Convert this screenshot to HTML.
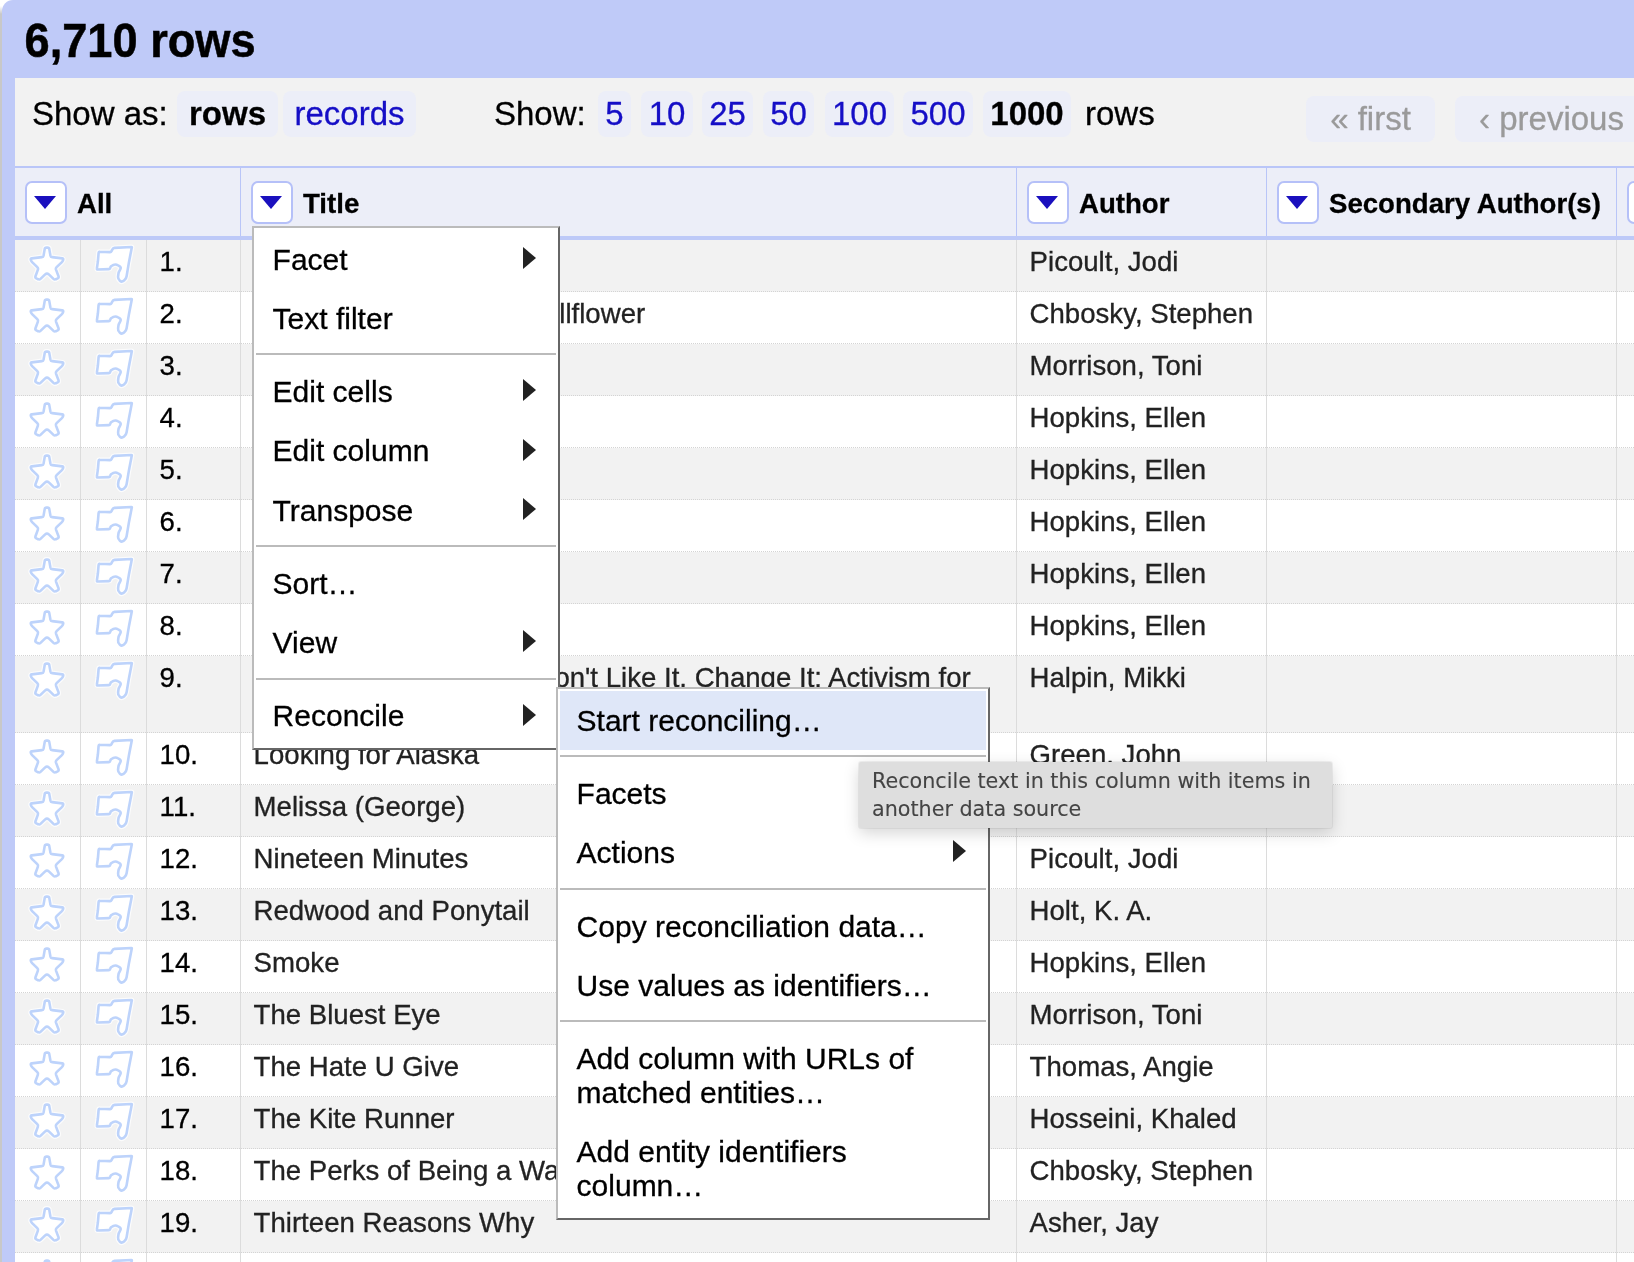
<!DOCTYPE html>
<html lang="en"><head><meta charset="utf-8"><title>OpenRefine</title>
<style>
html,body{margin:0;padding:0}
body{width:1634px;height:1262px;overflow:hidden;position:relative;background:#fff;font-family:"Liberation Sans",Arial,sans-serif;color:#000}
#root{position:absolute;left:0;top:0;width:1634px;height:1262px;overflow:hidden;opacity:.999;-webkit-text-stroke:.3px}
.abs{position:absolute}
#strip{left:0;top:6px;width:2px;height:1256px;background:linear-gradient(#fff,#c8c8c8 8px)}
#panel{left:2px;top:0;width:1632px;height:1262px;background:#bfcaf8;border-top-left-radius:11px}
#inner{left:15px;top:78px;width:1619px;height:1184px;background:#f2f2f2}
#title{left:24.5px;top:15.8px;-webkit-text-stroke:.5px #000;transform:scaleY(1.05);transform-origin:0 41.5px;font-size:45.2px;font-weight:700;line-height:52px;white-space:nowrap}
.bar{font-size:33px;line-height:46px;white-space:nowrap;top:91px;height:46px}
.btn{background:#eceef8;border-radius:8px;text-align:center;color:#150ec6}
.btn.sel{color:#000;font-weight:700}
.pg{top:96px;height:46px;color:#9a9a9a;line-height:45px}
#hdr{left:15px;top:166px;width:1619px;height:68px;border-top:2px solid #bac6f8;border-bottom:4px solid #bdc9f8;background:#eceef8}
.hc{position:absolute;top:0;height:68px;border-left:1px solid #b9c5f8}
.dd{position:absolute;left:10px;top:13px;width:38px;height:39px;border:2px solid #b5c0f8;border-radius:7px;background:#fff}
.dd:after{content:"";position:absolute;left:7.2px;top:12.6px;border-left:11.9px solid transparent;border-right:11.9px solid transparent;border-top:13.6px solid #1a10be}
.hl{position:absolute;left:62px;top:19px;font-size:27.6px;font-weight:700;line-height:34px;white-space:nowrap}
.row{position:absolute;left:15px;width:1619px;box-sizing:border-box;border-bottom:1px dotted #d4d4d4;font-size:27.6px;line-height:33px}
.row.odd{background:#f2f2f2}
.row.even{background:#fff}
.c{position:absolute;top:0;bottom:-1px;box-sizing:border-box;border-left:1px solid #dcdcdc;padding:5px 0 0 12.6px;color:#222;overflow:hidden}
.c0{left:0;width:66px;border-left:none}
.c1{left:65px;width:67px}
.c2{left:131px;width:95px;color:#000}
.c3{left:225px;width:776px;padding-right:20px}
.c4{left:1001px;width:250px}
.c5{left:1251px;width:350px}
.c6{left:1601px;width:30px}
.ic{position:absolute;fill:#fff;stroke:#bdd3fb;stroke-width:2.6;stroke-linejoin:round;filter:blur(.65px)}
.ic .halo{fill:none;stroke:rgba(255,255,255,.75);stroke-width:5}
.star{left:12px;top:4px;width:40px;height:40px}
.flag{left:11px;top:3px;width:44px;height:44px}
.menu{position:absolute;box-sizing:border-box;background:#fff;border:2px solid #bbb;border-right-color:#666;border-bottom-color:#666;padding:2px;font-size:30px;line-height:34px;color:#000}
.mi{position:relative;padding:12.6px 40px 12.6px 16.6px}
.mi.hi{background:#dfe7f8}
.mi.sub:after{content:"";position:absolute;right:20px;top:16.8px;border-top:11.5px solid transparent;border-bottom:11.5px solid transparent;border-left:13px solid #222}
.sep{height:2px;background:#bbb;margin:5px 0 7.2px}
#tip{left:859px;top:762px;width:473px;height:66px;box-sizing:border-box;background:#dedede;border-radius:2px;box-shadow:0 5px 16px rgba(0,0,0,.17),0 0 0 1px rgba(0,0,0,.05);-webkit-text-stroke:.1px;font-family:"DejaVu Sans","Liberation Sans",sans-serif;font-size:20.7px;line-height:28px;color:#444;padding:5px 0 0 13px;white-space:nowrap}
</style></head><body><div id="root">
<div class="abs" id="strip"></div>
<div class="abs" id="panel"></div>
<div class="abs" id="inner"></div>
<div class="abs" id="title">6,710 rows</div>

<div class="abs bar" style="left:32px">Show as:</div>
<div class="abs bar btn sel" style="left:177px;width:101px">rows</div>
<div class="abs bar btn" style="left:283px;width:133px">records</div>
<div class="abs bar" style="left:494px">Show:</div>
<div class="abs bar btn" style="left:598px;width:33px">5</div>
<div class="abs bar btn" style="left:641px;width:52px">10</div>
<div class="abs bar btn" style="left:702px;width:51px">25</div>
<div class="abs bar btn" style="left:763px;width:51px">50</div>
<div class="abs bar btn" style="left:825px;width:69px">100</div>
<div class="abs bar btn" style="left:903px;width:70px">500</div>
<div class="abs bar btn sel" style="left:983px;width:88px">1000</div>
<div class="abs bar" style="left:1085px">rows</div>
<div class="abs bar btn pg" style="left:1306px;width:129px">« first</div>
<div class="abs bar btn pg" style="left:1455px;width:193px">‹ previous</div>

<div class="abs" id="hdr">
<div class="hc" style="left:0;width:225px;border-left:none"><span class="dd"></span><span class="hl">All</span></div>
<div class="hc" style="left:225px;width:776px"><span class="dd"></span><span class="hl">Title</span></div>
<div class="hc" style="left:1001px;width:250px"><span class="dd"></span><span class="hl">Author</span></div>
<div class="hc" style="left:1251px;width:350px"><span class="dd"></span><span class="hl">Secondary Author(s)</span></div>
<div class="hc" style="left:1601px;width:30px"><span class="dd"></span></div>
</div>

<div class="row odd" style="top:240px;height:52px"><div class="c c0"><svg class="ic star" viewBox="0 0 40 40"><path class="halo" d="M17.7 5.1Q17.9 3.6 19.4 3.6L20.6 3.6Q22.1 3.6 22.3 5.1L23.4 11.4Q23.7 12.9 25.2 13.1L35.2 14.4Q36.5 14.6 36.2 15.8L36.1 16.0Q35.8 17.2 34.9 18.1L29.6 23.1Q28.5 24.1 29.0 25.6L31.5 32.3Q32.0 33.7 30.7 34.4L28.9 35.2Q27.6 35.9 26.5 34.9L21.8 30.4Q20.0 28.7 18.2 30.4L13.5 34.9Q12.4 35.9 11.1 35.2L9.3 34.4Q8.0 33.7 8.5 32.3L10.9 25.6Q11.4 24.2 10.3 23.1L5.1 18.1Q4.2 17.2 3.9 16.0L3.8 15.8Q3.5 14.6 4.8 14.4L14.8 13.1Q16.3 12.9 16.6 11.4Z"/><path d="M17.7 5.1Q17.9 3.6 19.4 3.6L20.6 3.6Q22.1 3.6 22.3 5.1L23.4 11.4Q23.7 12.9 25.2 13.1L35.2 14.4Q36.5 14.6 36.2 15.8L36.1 16.0Q35.8 17.2 34.9 18.1L29.6 23.1Q28.5 24.1 29.0 25.6L31.5 32.3Q32.0 33.7 30.7 34.4L28.9 35.2Q27.6 35.9 26.5 34.9L21.8 30.4Q20.0 28.7 18.2 30.4L13.5 34.9Q12.4 35.9 11.1 35.2L9.3 34.4Q8.0 33.7 8.5 32.3L10.9 25.6Q11.4 24.2 10.3 23.1L5.1 18.1Q4.2 17.2 3.9 16.0L3.8 15.8Q3.5 14.6 4.8 14.4L14.8 13.1Q16.3 12.9 16.6 11.4Z"/></svg></div><div class="c c1"><svg class="ic flag" viewBox="0 0 44 44"><path class="halo" d="M6.6 9.8Q6.7 8.6 7.9 8.7L18.1 9.1Q19.1 9.1 19.5 8.2L20.4 6.4Q21.0 5.0 22.5 4.9L39.4 4.0Q40.0 4.0 39.8 4.5L37.0 18.9L34.6 33.2Q34.2 35.7 32.3 37.3L31.7 37.8Q29.7 39.4 27.9 37.8L27.6 37.4Q25.8 35.8 26.1 33.3L26.4 30.9Q26.7 28.9 27.8 27.2L28.2 26.5Q29.5 24.5 27.4 23.2L26.3 22.5Q23.7 20.9 21.5 21.9L20.1 22.6Q18.7 23.2 18.3 24.5L18.1 25.1Q17.8 26.1 16.8 26.1L5.9 26.5Q4.7 26.6 4.9 25.4L5.9 18.3Z"/><path d="M6.6 9.8Q6.7 8.6 7.9 8.7L18.1 9.1Q19.1 9.1 19.5 8.2L20.4 6.4Q21.0 5.0 22.5 4.9L39.4 4.0Q40.0 4.0 39.8 4.5L37.0 18.9L34.6 33.2Q34.2 35.7 32.3 37.3L31.7 37.8Q29.7 39.4 27.9 37.8L27.6 37.4Q25.8 35.8 26.1 33.3L26.4 30.9Q26.7 28.9 27.8 27.2L28.2 26.5Q29.5 24.5 27.4 23.2L26.3 22.5Q23.7 20.9 21.5 21.9L20.1 22.6Q18.7 23.2 18.3 24.5L18.1 25.1Q17.8 26.1 16.8 26.1L5.9 26.5Q4.7 26.6 4.9 25.4L5.9 18.3Z"/></svg></div><div class="c c2">1.</div><div class="c c3">Nineteen Minutes</div><div class="c c4">Picoult, Jodi</div><div class="c c5"></div><div class="c c6"></div></div>
<div class="row even" style="top:292px;height:52px"><div class="c c0"><svg class="ic star" viewBox="0 0 40 40"><path class="halo" d="M17.7 5.1Q17.9 3.6 19.4 3.6L20.6 3.6Q22.1 3.6 22.3 5.1L23.4 11.4Q23.7 12.9 25.2 13.1L35.2 14.4Q36.5 14.6 36.2 15.8L36.1 16.0Q35.8 17.2 34.9 18.1L29.6 23.1Q28.5 24.1 29.0 25.6L31.5 32.3Q32.0 33.7 30.7 34.4L28.9 35.2Q27.6 35.9 26.5 34.9L21.8 30.4Q20.0 28.7 18.2 30.4L13.5 34.9Q12.4 35.9 11.1 35.2L9.3 34.4Q8.0 33.7 8.5 32.3L10.9 25.6Q11.4 24.2 10.3 23.1L5.1 18.1Q4.2 17.2 3.9 16.0L3.8 15.8Q3.5 14.6 4.8 14.4L14.8 13.1Q16.3 12.9 16.6 11.4Z"/><path d="M17.7 5.1Q17.9 3.6 19.4 3.6L20.6 3.6Q22.1 3.6 22.3 5.1L23.4 11.4Q23.7 12.9 25.2 13.1L35.2 14.4Q36.5 14.6 36.2 15.8L36.1 16.0Q35.8 17.2 34.9 18.1L29.6 23.1Q28.5 24.1 29.0 25.6L31.5 32.3Q32.0 33.7 30.7 34.4L28.9 35.2Q27.6 35.9 26.5 34.9L21.8 30.4Q20.0 28.7 18.2 30.4L13.5 34.9Q12.4 35.9 11.1 35.2L9.3 34.4Q8.0 33.7 8.5 32.3L10.9 25.6Q11.4 24.2 10.3 23.1L5.1 18.1Q4.2 17.2 3.9 16.0L3.8 15.8Q3.5 14.6 4.8 14.4L14.8 13.1Q16.3 12.9 16.6 11.4Z"/></svg></div><div class="c c1"><svg class="ic flag" viewBox="0 0 44 44"><path class="halo" d="M6.6 9.8Q6.7 8.6 7.9 8.7L18.1 9.1Q19.1 9.1 19.5 8.2L20.4 6.4Q21.0 5.0 22.5 4.9L39.4 4.0Q40.0 4.0 39.8 4.5L37.0 18.9L34.6 33.2Q34.2 35.7 32.3 37.3L31.7 37.8Q29.7 39.4 27.9 37.8L27.6 37.4Q25.8 35.8 26.1 33.3L26.4 30.9Q26.7 28.9 27.8 27.2L28.2 26.5Q29.5 24.5 27.4 23.2L26.3 22.5Q23.7 20.9 21.5 21.9L20.1 22.6Q18.7 23.2 18.3 24.5L18.1 25.1Q17.8 26.1 16.8 26.1L5.9 26.5Q4.7 26.6 4.9 25.4L5.9 18.3Z"/><path d="M6.6 9.8Q6.7 8.6 7.9 8.7L18.1 9.1Q19.1 9.1 19.5 8.2L20.4 6.4Q21.0 5.0 22.5 4.9L39.4 4.0Q40.0 4.0 39.8 4.5L37.0 18.9L34.6 33.2Q34.2 35.7 32.3 37.3L31.7 37.8Q29.7 39.4 27.9 37.8L27.6 37.4Q25.8 35.8 26.1 33.3L26.4 30.9Q26.7 28.9 27.8 27.2L28.2 26.5Q29.5 24.5 27.4 23.2L26.3 22.5Q23.7 20.9 21.5 21.9L20.1 22.6Q18.7 23.2 18.3 24.5L18.1 25.1Q17.8 26.1 16.8 26.1L5.9 26.5Q4.7 26.6 4.9 25.4L5.9 18.3Z"/></svg></div><div class="c c2">2.</div><div class="c c3">The Perks of Being a Wallflower</div><div class="c c4">Chbosky, Stephen</div><div class="c c5"></div><div class="c c6"></div></div>
<div class="row odd" style="top:344px;height:52px"><div class="c c0"><svg class="ic star" viewBox="0 0 40 40"><path class="halo" d="M17.7 5.1Q17.9 3.6 19.4 3.6L20.6 3.6Q22.1 3.6 22.3 5.1L23.4 11.4Q23.7 12.9 25.2 13.1L35.2 14.4Q36.5 14.6 36.2 15.8L36.1 16.0Q35.8 17.2 34.9 18.1L29.6 23.1Q28.5 24.1 29.0 25.6L31.5 32.3Q32.0 33.7 30.7 34.4L28.9 35.2Q27.6 35.9 26.5 34.9L21.8 30.4Q20.0 28.7 18.2 30.4L13.5 34.9Q12.4 35.9 11.1 35.2L9.3 34.4Q8.0 33.7 8.5 32.3L10.9 25.6Q11.4 24.2 10.3 23.1L5.1 18.1Q4.2 17.2 3.9 16.0L3.8 15.8Q3.5 14.6 4.8 14.4L14.8 13.1Q16.3 12.9 16.6 11.4Z"/><path d="M17.7 5.1Q17.9 3.6 19.4 3.6L20.6 3.6Q22.1 3.6 22.3 5.1L23.4 11.4Q23.7 12.9 25.2 13.1L35.2 14.4Q36.5 14.6 36.2 15.8L36.1 16.0Q35.8 17.2 34.9 18.1L29.6 23.1Q28.5 24.1 29.0 25.6L31.5 32.3Q32.0 33.7 30.7 34.4L28.9 35.2Q27.6 35.9 26.5 34.9L21.8 30.4Q20.0 28.7 18.2 30.4L13.5 34.9Q12.4 35.9 11.1 35.2L9.3 34.4Q8.0 33.7 8.5 32.3L10.9 25.6Q11.4 24.2 10.3 23.1L5.1 18.1Q4.2 17.2 3.9 16.0L3.8 15.8Q3.5 14.6 4.8 14.4L14.8 13.1Q16.3 12.9 16.6 11.4Z"/></svg></div><div class="c c1"><svg class="ic flag" viewBox="0 0 44 44"><path class="halo" d="M6.6 9.8Q6.7 8.6 7.9 8.7L18.1 9.1Q19.1 9.1 19.5 8.2L20.4 6.4Q21.0 5.0 22.5 4.9L39.4 4.0Q40.0 4.0 39.8 4.5L37.0 18.9L34.6 33.2Q34.2 35.7 32.3 37.3L31.7 37.8Q29.7 39.4 27.9 37.8L27.6 37.4Q25.8 35.8 26.1 33.3L26.4 30.9Q26.7 28.9 27.8 27.2L28.2 26.5Q29.5 24.5 27.4 23.2L26.3 22.5Q23.7 20.9 21.5 21.9L20.1 22.6Q18.7 23.2 18.3 24.5L18.1 25.1Q17.8 26.1 16.8 26.1L5.9 26.5Q4.7 26.6 4.9 25.4L5.9 18.3Z"/><path d="M6.6 9.8Q6.7 8.6 7.9 8.7L18.1 9.1Q19.1 9.1 19.5 8.2L20.4 6.4Q21.0 5.0 22.5 4.9L39.4 4.0Q40.0 4.0 39.8 4.5L37.0 18.9L34.6 33.2Q34.2 35.7 32.3 37.3L31.7 37.8Q29.7 39.4 27.9 37.8L27.6 37.4Q25.8 35.8 26.1 33.3L26.4 30.9Q26.7 28.9 27.8 27.2L28.2 26.5Q29.5 24.5 27.4 23.2L26.3 22.5Q23.7 20.9 21.5 21.9L20.1 22.6Q18.7 23.2 18.3 24.5L18.1 25.1Q17.8 26.1 16.8 26.1L5.9 26.5Q4.7 26.6 4.9 25.4L5.9 18.3Z"/></svg></div><div class="c c2">3.</div><div class="c c3">Beloved</div><div class="c c4">Morrison, Toni</div><div class="c c5"></div><div class="c c6"></div></div>
<div class="row even" style="top:396px;height:52px"><div class="c c0"><svg class="ic star" viewBox="0 0 40 40"><path class="halo" d="M17.7 5.1Q17.9 3.6 19.4 3.6L20.6 3.6Q22.1 3.6 22.3 5.1L23.4 11.4Q23.7 12.9 25.2 13.1L35.2 14.4Q36.5 14.6 36.2 15.8L36.1 16.0Q35.8 17.2 34.9 18.1L29.6 23.1Q28.5 24.1 29.0 25.6L31.5 32.3Q32.0 33.7 30.7 34.4L28.9 35.2Q27.6 35.9 26.5 34.9L21.8 30.4Q20.0 28.7 18.2 30.4L13.5 34.9Q12.4 35.9 11.1 35.2L9.3 34.4Q8.0 33.7 8.5 32.3L10.9 25.6Q11.4 24.2 10.3 23.1L5.1 18.1Q4.2 17.2 3.9 16.0L3.8 15.8Q3.5 14.6 4.8 14.4L14.8 13.1Q16.3 12.9 16.6 11.4Z"/><path d="M17.7 5.1Q17.9 3.6 19.4 3.6L20.6 3.6Q22.1 3.6 22.3 5.1L23.4 11.4Q23.7 12.9 25.2 13.1L35.2 14.4Q36.5 14.6 36.2 15.8L36.1 16.0Q35.8 17.2 34.9 18.1L29.6 23.1Q28.5 24.1 29.0 25.6L31.5 32.3Q32.0 33.7 30.7 34.4L28.9 35.2Q27.6 35.9 26.5 34.9L21.8 30.4Q20.0 28.7 18.2 30.4L13.5 34.9Q12.4 35.9 11.1 35.2L9.3 34.4Q8.0 33.7 8.5 32.3L10.9 25.6Q11.4 24.2 10.3 23.1L5.1 18.1Q4.2 17.2 3.9 16.0L3.8 15.8Q3.5 14.6 4.8 14.4L14.8 13.1Q16.3 12.9 16.6 11.4Z"/></svg></div><div class="c c1"><svg class="ic flag" viewBox="0 0 44 44"><path class="halo" d="M6.6 9.8Q6.7 8.6 7.9 8.7L18.1 9.1Q19.1 9.1 19.5 8.2L20.4 6.4Q21.0 5.0 22.5 4.9L39.4 4.0Q40.0 4.0 39.8 4.5L37.0 18.9L34.6 33.2Q34.2 35.7 32.3 37.3L31.7 37.8Q29.7 39.4 27.9 37.8L27.6 37.4Q25.8 35.8 26.1 33.3L26.4 30.9Q26.7 28.9 27.8 27.2L28.2 26.5Q29.5 24.5 27.4 23.2L26.3 22.5Q23.7 20.9 21.5 21.9L20.1 22.6Q18.7 23.2 18.3 24.5L18.1 25.1Q17.8 26.1 16.8 26.1L5.9 26.5Q4.7 26.6 4.9 25.4L5.9 18.3Z"/><path d="M6.6 9.8Q6.7 8.6 7.9 8.7L18.1 9.1Q19.1 9.1 19.5 8.2L20.4 6.4Q21.0 5.0 22.5 4.9L39.4 4.0Q40.0 4.0 39.8 4.5L37.0 18.9L34.6 33.2Q34.2 35.7 32.3 37.3L31.7 37.8Q29.7 39.4 27.9 37.8L27.6 37.4Q25.8 35.8 26.1 33.3L26.4 30.9Q26.7 28.9 27.8 27.2L28.2 26.5Q29.5 24.5 27.4 23.2L26.3 22.5Q23.7 20.9 21.5 21.9L20.1 22.6Q18.7 23.2 18.3 24.5L18.1 25.1Q17.8 26.1 16.8 26.1L5.9 26.5Q4.7 26.6 4.9 25.4L5.9 18.3Z"/></svg></div><div class="c c2">4.</div><div class="c c3">Crank</div><div class="c c4">Hopkins, Ellen</div><div class="c c5"></div><div class="c c6"></div></div>
<div class="row odd" style="top:448px;height:52px"><div class="c c0"><svg class="ic star" viewBox="0 0 40 40"><path class="halo" d="M17.7 5.1Q17.9 3.6 19.4 3.6L20.6 3.6Q22.1 3.6 22.3 5.1L23.4 11.4Q23.7 12.9 25.2 13.1L35.2 14.4Q36.5 14.6 36.2 15.8L36.1 16.0Q35.8 17.2 34.9 18.1L29.6 23.1Q28.5 24.1 29.0 25.6L31.5 32.3Q32.0 33.7 30.7 34.4L28.9 35.2Q27.6 35.9 26.5 34.9L21.8 30.4Q20.0 28.7 18.2 30.4L13.5 34.9Q12.4 35.9 11.1 35.2L9.3 34.4Q8.0 33.7 8.5 32.3L10.9 25.6Q11.4 24.2 10.3 23.1L5.1 18.1Q4.2 17.2 3.9 16.0L3.8 15.8Q3.5 14.6 4.8 14.4L14.8 13.1Q16.3 12.9 16.6 11.4Z"/><path d="M17.7 5.1Q17.9 3.6 19.4 3.6L20.6 3.6Q22.1 3.6 22.3 5.1L23.4 11.4Q23.7 12.9 25.2 13.1L35.2 14.4Q36.5 14.6 36.2 15.8L36.1 16.0Q35.8 17.2 34.9 18.1L29.6 23.1Q28.5 24.1 29.0 25.6L31.5 32.3Q32.0 33.7 30.7 34.4L28.9 35.2Q27.6 35.9 26.5 34.9L21.8 30.4Q20.0 28.7 18.2 30.4L13.5 34.9Q12.4 35.9 11.1 35.2L9.3 34.4Q8.0 33.7 8.5 32.3L10.9 25.6Q11.4 24.2 10.3 23.1L5.1 18.1Q4.2 17.2 3.9 16.0L3.8 15.8Q3.5 14.6 4.8 14.4L14.8 13.1Q16.3 12.9 16.6 11.4Z"/></svg></div><div class="c c1"><svg class="ic flag" viewBox="0 0 44 44"><path class="halo" d="M6.6 9.8Q6.7 8.6 7.9 8.7L18.1 9.1Q19.1 9.1 19.5 8.2L20.4 6.4Q21.0 5.0 22.5 4.9L39.4 4.0Q40.0 4.0 39.8 4.5L37.0 18.9L34.6 33.2Q34.2 35.7 32.3 37.3L31.7 37.8Q29.7 39.4 27.9 37.8L27.6 37.4Q25.8 35.8 26.1 33.3L26.4 30.9Q26.7 28.9 27.8 27.2L28.2 26.5Q29.5 24.5 27.4 23.2L26.3 22.5Q23.7 20.9 21.5 21.9L20.1 22.6Q18.7 23.2 18.3 24.5L18.1 25.1Q17.8 26.1 16.8 26.1L5.9 26.5Q4.7 26.6 4.9 25.4L5.9 18.3Z"/><path d="M6.6 9.8Q6.7 8.6 7.9 8.7L18.1 9.1Q19.1 9.1 19.5 8.2L20.4 6.4Q21.0 5.0 22.5 4.9L39.4 4.0Q40.0 4.0 39.8 4.5L37.0 18.9L34.6 33.2Q34.2 35.7 32.3 37.3L31.7 37.8Q29.7 39.4 27.9 37.8L27.6 37.4Q25.8 35.8 26.1 33.3L26.4 30.9Q26.7 28.9 27.8 27.2L28.2 26.5Q29.5 24.5 27.4 23.2L26.3 22.5Q23.7 20.9 21.5 21.9L20.1 22.6Q18.7 23.2 18.3 24.5L18.1 25.1Q17.8 26.1 16.8 26.1L5.9 26.5Q4.7 26.6 4.9 25.4L5.9 18.3Z"/></svg></div><div class="c c2">5.</div><div class="c c3">Tricks</div><div class="c c4">Hopkins, Ellen</div><div class="c c5"></div><div class="c c6"></div></div>
<div class="row even" style="top:500px;height:52px"><div class="c c0"><svg class="ic star" viewBox="0 0 40 40"><path class="halo" d="M17.7 5.1Q17.9 3.6 19.4 3.6L20.6 3.6Q22.1 3.6 22.3 5.1L23.4 11.4Q23.7 12.9 25.2 13.1L35.2 14.4Q36.5 14.6 36.2 15.8L36.1 16.0Q35.8 17.2 34.9 18.1L29.6 23.1Q28.5 24.1 29.0 25.6L31.5 32.3Q32.0 33.7 30.7 34.4L28.9 35.2Q27.6 35.9 26.5 34.9L21.8 30.4Q20.0 28.7 18.2 30.4L13.5 34.9Q12.4 35.9 11.1 35.2L9.3 34.4Q8.0 33.7 8.5 32.3L10.9 25.6Q11.4 24.2 10.3 23.1L5.1 18.1Q4.2 17.2 3.9 16.0L3.8 15.8Q3.5 14.6 4.8 14.4L14.8 13.1Q16.3 12.9 16.6 11.4Z"/><path d="M17.7 5.1Q17.9 3.6 19.4 3.6L20.6 3.6Q22.1 3.6 22.3 5.1L23.4 11.4Q23.7 12.9 25.2 13.1L35.2 14.4Q36.5 14.6 36.2 15.8L36.1 16.0Q35.8 17.2 34.9 18.1L29.6 23.1Q28.5 24.1 29.0 25.6L31.5 32.3Q32.0 33.7 30.7 34.4L28.9 35.2Q27.6 35.9 26.5 34.9L21.8 30.4Q20.0 28.7 18.2 30.4L13.5 34.9Q12.4 35.9 11.1 35.2L9.3 34.4Q8.0 33.7 8.5 32.3L10.9 25.6Q11.4 24.2 10.3 23.1L5.1 18.1Q4.2 17.2 3.9 16.0L3.8 15.8Q3.5 14.6 4.8 14.4L14.8 13.1Q16.3 12.9 16.6 11.4Z"/></svg></div><div class="c c1"><svg class="ic flag" viewBox="0 0 44 44"><path class="halo" d="M6.6 9.8Q6.7 8.6 7.9 8.7L18.1 9.1Q19.1 9.1 19.5 8.2L20.4 6.4Q21.0 5.0 22.5 4.9L39.4 4.0Q40.0 4.0 39.8 4.5L37.0 18.9L34.6 33.2Q34.2 35.7 32.3 37.3L31.7 37.8Q29.7 39.4 27.9 37.8L27.6 37.4Q25.8 35.8 26.1 33.3L26.4 30.9Q26.7 28.9 27.8 27.2L28.2 26.5Q29.5 24.5 27.4 23.2L26.3 22.5Q23.7 20.9 21.5 21.9L20.1 22.6Q18.7 23.2 18.3 24.5L18.1 25.1Q17.8 26.1 16.8 26.1L5.9 26.5Q4.7 26.6 4.9 25.4L5.9 18.3Z"/><path d="M6.6 9.8Q6.7 8.6 7.9 8.7L18.1 9.1Q19.1 9.1 19.5 8.2L20.4 6.4Q21.0 5.0 22.5 4.9L39.4 4.0Q40.0 4.0 39.8 4.5L37.0 18.9L34.6 33.2Q34.2 35.7 32.3 37.3L31.7 37.8Q29.7 39.4 27.9 37.8L27.6 37.4Q25.8 35.8 26.1 33.3L26.4 30.9Q26.7 28.9 27.8 27.2L28.2 26.5Q29.5 24.5 27.4 23.2L26.3 22.5Q23.7 20.9 21.5 21.9L20.1 22.6Q18.7 23.2 18.3 24.5L18.1 25.1Q17.8 26.1 16.8 26.1L5.9 26.5Q4.7 26.6 4.9 25.4L5.9 18.3Z"/></svg></div><div class="c c2">6.</div><div class="c c3">Identical</div><div class="c c4">Hopkins, Ellen</div><div class="c c5"></div><div class="c c6"></div></div>
<div class="row odd" style="top:552px;height:52px"><div class="c c0"><svg class="ic star" viewBox="0 0 40 40"><path class="halo" d="M17.7 5.1Q17.9 3.6 19.4 3.6L20.6 3.6Q22.1 3.6 22.3 5.1L23.4 11.4Q23.7 12.9 25.2 13.1L35.2 14.4Q36.5 14.6 36.2 15.8L36.1 16.0Q35.8 17.2 34.9 18.1L29.6 23.1Q28.5 24.1 29.0 25.6L31.5 32.3Q32.0 33.7 30.7 34.4L28.9 35.2Q27.6 35.9 26.5 34.9L21.8 30.4Q20.0 28.7 18.2 30.4L13.5 34.9Q12.4 35.9 11.1 35.2L9.3 34.4Q8.0 33.7 8.5 32.3L10.9 25.6Q11.4 24.2 10.3 23.1L5.1 18.1Q4.2 17.2 3.9 16.0L3.8 15.8Q3.5 14.6 4.8 14.4L14.8 13.1Q16.3 12.9 16.6 11.4Z"/><path d="M17.7 5.1Q17.9 3.6 19.4 3.6L20.6 3.6Q22.1 3.6 22.3 5.1L23.4 11.4Q23.7 12.9 25.2 13.1L35.2 14.4Q36.5 14.6 36.2 15.8L36.1 16.0Q35.8 17.2 34.9 18.1L29.6 23.1Q28.5 24.1 29.0 25.6L31.5 32.3Q32.0 33.7 30.7 34.4L28.9 35.2Q27.6 35.9 26.5 34.9L21.8 30.4Q20.0 28.7 18.2 30.4L13.5 34.9Q12.4 35.9 11.1 35.2L9.3 34.4Q8.0 33.7 8.5 32.3L10.9 25.6Q11.4 24.2 10.3 23.1L5.1 18.1Q4.2 17.2 3.9 16.0L3.8 15.8Q3.5 14.6 4.8 14.4L14.8 13.1Q16.3 12.9 16.6 11.4Z"/></svg></div><div class="c c1"><svg class="ic flag" viewBox="0 0 44 44"><path class="halo" d="M6.6 9.8Q6.7 8.6 7.9 8.7L18.1 9.1Q19.1 9.1 19.5 8.2L20.4 6.4Q21.0 5.0 22.5 4.9L39.4 4.0Q40.0 4.0 39.8 4.5L37.0 18.9L34.6 33.2Q34.2 35.7 32.3 37.3L31.7 37.8Q29.7 39.4 27.9 37.8L27.6 37.4Q25.8 35.8 26.1 33.3L26.4 30.9Q26.7 28.9 27.8 27.2L28.2 26.5Q29.5 24.5 27.4 23.2L26.3 22.5Q23.7 20.9 21.5 21.9L20.1 22.6Q18.7 23.2 18.3 24.5L18.1 25.1Q17.8 26.1 16.8 26.1L5.9 26.5Q4.7 26.6 4.9 25.4L5.9 18.3Z"/><path d="M6.6 9.8Q6.7 8.6 7.9 8.7L18.1 9.1Q19.1 9.1 19.5 8.2L20.4 6.4Q21.0 5.0 22.5 4.9L39.4 4.0Q40.0 4.0 39.8 4.5L37.0 18.9L34.6 33.2Q34.2 35.7 32.3 37.3L31.7 37.8Q29.7 39.4 27.9 37.8L27.6 37.4Q25.8 35.8 26.1 33.3L26.4 30.9Q26.7 28.9 27.8 27.2L28.2 26.5Q29.5 24.5 27.4 23.2L26.3 22.5Q23.7 20.9 21.5 21.9L20.1 22.6Q18.7 23.2 18.3 24.5L18.1 25.1Q17.8 26.1 16.8 26.1L5.9 26.5Q4.7 26.6 4.9 25.4L5.9 18.3Z"/></svg></div><div class="c c2">7.</div><div class="c c3">Burned</div><div class="c c4">Hopkins, Ellen</div><div class="c c5"></div><div class="c c6"></div></div>
<div class="row even" style="top:604px;height:52px"><div class="c c0"><svg class="ic star" viewBox="0 0 40 40"><path class="halo" d="M17.7 5.1Q17.9 3.6 19.4 3.6L20.6 3.6Q22.1 3.6 22.3 5.1L23.4 11.4Q23.7 12.9 25.2 13.1L35.2 14.4Q36.5 14.6 36.2 15.8L36.1 16.0Q35.8 17.2 34.9 18.1L29.6 23.1Q28.5 24.1 29.0 25.6L31.5 32.3Q32.0 33.7 30.7 34.4L28.9 35.2Q27.6 35.9 26.5 34.9L21.8 30.4Q20.0 28.7 18.2 30.4L13.5 34.9Q12.4 35.9 11.1 35.2L9.3 34.4Q8.0 33.7 8.5 32.3L10.9 25.6Q11.4 24.2 10.3 23.1L5.1 18.1Q4.2 17.2 3.9 16.0L3.8 15.8Q3.5 14.6 4.8 14.4L14.8 13.1Q16.3 12.9 16.6 11.4Z"/><path d="M17.7 5.1Q17.9 3.6 19.4 3.6L20.6 3.6Q22.1 3.6 22.3 5.1L23.4 11.4Q23.7 12.9 25.2 13.1L35.2 14.4Q36.5 14.6 36.2 15.8L36.1 16.0Q35.8 17.2 34.9 18.1L29.6 23.1Q28.5 24.1 29.0 25.6L31.5 32.3Q32.0 33.7 30.7 34.4L28.9 35.2Q27.6 35.9 26.5 34.9L21.8 30.4Q20.0 28.7 18.2 30.4L13.5 34.9Q12.4 35.9 11.1 35.2L9.3 34.4Q8.0 33.7 8.5 32.3L10.9 25.6Q11.4 24.2 10.3 23.1L5.1 18.1Q4.2 17.2 3.9 16.0L3.8 15.8Q3.5 14.6 4.8 14.4L14.8 13.1Q16.3 12.9 16.6 11.4Z"/></svg></div><div class="c c1"><svg class="ic flag" viewBox="0 0 44 44"><path class="halo" d="M6.6 9.8Q6.7 8.6 7.9 8.7L18.1 9.1Q19.1 9.1 19.5 8.2L20.4 6.4Q21.0 5.0 22.5 4.9L39.4 4.0Q40.0 4.0 39.8 4.5L37.0 18.9L34.6 33.2Q34.2 35.7 32.3 37.3L31.7 37.8Q29.7 39.4 27.9 37.8L27.6 37.4Q25.8 35.8 26.1 33.3L26.4 30.9Q26.7 28.9 27.8 27.2L28.2 26.5Q29.5 24.5 27.4 23.2L26.3 22.5Q23.7 20.9 21.5 21.9L20.1 22.6Q18.7 23.2 18.3 24.5L18.1 25.1Q17.8 26.1 16.8 26.1L5.9 26.5Q4.7 26.6 4.9 25.4L5.9 18.3Z"/><path d="M6.6 9.8Q6.7 8.6 7.9 8.7L18.1 9.1Q19.1 9.1 19.5 8.2L20.4 6.4Q21.0 5.0 22.5 4.9L39.4 4.0Q40.0 4.0 39.8 4.5L37.0 18.9L34.6 33.2Q34.2 35.7 32.3 37.3L31.7 37.8Q29.7 39.4 27.9 37.8L27.6 37.4Q25.8 35.8 26.1 33.3L26.4 30.9Q26.7 28.9 27.8 27.2L28.2 26.5Q29.5 24.5 27.4 23.2L26.3 22.5Q23.7 20.9 21.5 21.9L20.1 22.6Q18.7 23.2 18.3 24.5L18.1 25.1Q17.8 26.1 16.8 26.1L5.9 26.5Q4.7 26.6 4.9 25.4L5.9 18.3Z"/></svg></div><div class="c c2">8.</div><div class="c c3">Tilt</div><div class="c c4">Hopkins, Ellen</div><div class="c c5"></div><div class="c c6"></div></div>
<div class="row odd" style="top:656px;height:77px"><div class="c c0"><svg class="ic star" viewBox="0 0 40 40"><path class="halo" d="M17.7 5.1Q17.9 3.6 19.4 3.6L20.6 3.6Q22.1 3.6 22.3 5.1L23.4 11.4Q23.7 12.9 25.2 13.1L35.2 14.4Q36.5 14.6 36.2 15.8L36.1 16.0Q35.8 17.2 34.9 18.1L29.6 23.1Q28.5 24.1 29.0 25.6L31.5 32.3Q32.0 33.7 30.7 34.4L28.9 35.2Q27.6 35.9 26.5 34.9L21.8 30.4Q20.0 28.7 18.2 30.4L13.5 34.9Q12.4 35.9 11.1 35.2L9.3 34.4Q8.0 33.7 8.5 32.3L10.9 25.6Q11.4 24.2 10.3 23.1L5.1 18.1Q4.2 17.2 3.9 16.0L3.8 15.8Q3.5 14.6 4.8 14.4L14.8 13.1Q16.3 12.9 16.6 11.4Z"/><path d="M17.7 5.1Q17.9 3.6 19.4 3.6L20.6 3.6Q22.1 3.6 22.3 5.1L23.4 11.4Q23.7 12.9 25.2 13.1L35.2 14.4Q36.5 14.6 36.2 15.8L36.1 16.0Q35.8 17.2 34.9 18.1L29.6 23.1Q28.5 24.1 29.0 25.6L31.5 32.3Q32.0 33.7 30.7 34.4L28.9 35.2Q27.6 35.9 26.5 34.9L21.8 30.4Q20.0 28.7 18.2 30.4L13.5 34.9Q12.4 35.9 11.1 35.2L9.3 34.4Q8.0 33.7 8.5 32.3L10.9 25.6Q11.4 24.2 10.3 23.1L5.1 18.1Q4.2 17.2 3.9 16.0L3.8 15.8Q3.5 14.6 4.8 14.4L14.8 13.1Q16.3 12.9 16.6 11.4Z"/></svg></div><div class="c c1"><svg class="ic flag" viewBox="0 0 44 44"><path class="halo" d="M6.6 9.8Q6.7 8.6 7.9 8.7L18.1 9.1Q19.1 9.1 19.5 8.2L20.4 6.4Q21.0 5.0 22.5 4.9L39.4 4.0Q40.0 4.0 39.8 4.5L37.0 18.9L34.6 33.2Q34.2 35.7 32.3 37.3L31.7 37.8Q29.7 39.4 27.9 37.8L27.6 37.4Q25.8 35.8 26.1 33.3L26.4 30.9Q26.7 28.9 27.8 27.2L28.2 26.5Q29.5 24.5 27.4 23.2L26.3 22.5Q23.7 20.9 21.5 21.9L20.1 22.6Q18.7 23.2 18.3 24.5L18.1 25.1Q17.8 26.1 16.8 26.1L5.9 26.5Q4.7 26.6 4.9 25.4L5.9 18.3Z"/><path d="M6.6 9.8Q6.7 8.6 7.9 8.7L18.1 9.1Q19.1 9.1 19.5 8.2L20.4 6.4Q21.0 5.0 22.5 4.9L39.4 4.0Q40.0 4.0 39.8 4.5L37.0 18.9L34.6 33.2Q34.2 35.7 32.3 37.3L31.7 37.8Q29.7 39.4 27.9 37.8L27.6 37.4Q25.8 35.8 26.1 33.3L26.4 30.9Q26.7 28.9 27.8 27.2L28.2 26.5Q29.5 24.5 27.4 23.2L26.3 22.5Q23.7 20.9 21.5 21.9L20.1 22.6Q18.7 23.2 18.3 24.5L18.1 25.1Q17.8 26.1 16.8 26.1L5.9 26.5Q4.7 26.6 4.9 25.4L5.9 18.3Z"/></svg></div><div class="c c2">9.</div><div class="c c3">It's Your World—If You Don't Like It, Change It: Activism for Teenagers</div><div class="c c4">Halpin, Mikki</div><div class="c c5"></div><div class="c c6"></div></div>
<div class="row even" style="top:733px;height:52px"><div class="c c0"><svg class="ic star" viewBox="0 0 40 40"><path class="halo" d="M17.7 5.1Q17.9 3.6 19.4 3.6L20.6 3.6Q22.1 3.6 22.3 5.1L23.4 11.4Q23.7 12.9 25.2 13.1L35.2 14.4Q36.5 14.6 36.2 15.8L36.1 16.0Q35.8 17.2 34.9 18.1L29.6 23.1Q28.5 24.1 29.0 25.6L31.5 32.3Q32.0 33.7 30.7 34.4L28.9 35.2Q27.6 35.9 26.5 34.9L21.8 30.4Q20.0 28.7 18.2 30.4L13.5 34.9Q12.4 35.9 11.1 35.2L9.3 34.4Q8.0 33.7 8.5 32.3L10.9 25.6Q11.4 24.2 10.3 23.1L5.1 18.1Q4.2 17.2 3.9 16.0L3.8 15.8Q3.5 14.6 4.8 14.4L14.8 13.1Q16.3 12.9 16.6 11.4Z"/><path d="M17.7 5.1Q17.9 3.6 19.4 3.6L20.6 3.6Q22.1 3.6 22.3 5.1L23.4 11.4Q23.7 12.9 25.2 13.1L35.2 14.4Q36.5 14.6 36.2 15.8L36.1 16.0Q35.8 17.2 34.9 18.1L29.6 23.1Q28.5 24.1 29.0 25.6L31.5 32.3Q32.0 33.7 30.7 34.4L28.9 35.2Q27.6 35.9 26.5 34.9L21.8 30.4Q20.0 28.7 18.2 30.4L13.5 34.9Q12.4 35.9 11.1 35.2L9.3 34.4Q8.0 33.7 8.5 32.3L10.9 25.6Q11.4 24.2 10.3 23.1L5.1 18.1Q4.2 17.2 3.9 16.0L3.8 15.8Q3.5 14.6 4.8 14.4L14.8 13.1Q16.3 12.9 16.6 11.4Z"/></svg></div><div class="c c1"><svg class="ic flag" viewBox="0 0 44 44"><path class="halo" d="M6.6 9.8Q6.7 8.6 7.9 8.7L18.1 9.1Q19.1 9.1 19.5 8.2L20.4 6.4Q21.0 5.0 22.5 4.9L39.4 4.0Q40.0 4.0 39.8 4.5L37.0 18.9L34.6 33.2Q34.2 35.7 32.3 37.3L31.7 37.8Q29.7 39.4 27.9 37.8L27.6 37.4Q25.8 35.8 26.1 33.3L26.4 30.9Q26.7 28.9 27.8 27.2L28.2 26.5Q29.5 24.5 27.4 23.2L26.3 22.5Q23.7 20.9 21.5 21.9L20.1 22.6Q18.7 23.2 18.3 24.5L18.1 25.1Q17.8 26.1 16.8 26.1L5.9 26.5Q4.7 26.6 4.9 25.4L5.9 18.3Z"/><path d="M6.6 9.8Q6.7 8.6 7.9 8.7L18.1 9.1Q19.1 9.1 19.5 8.2L20.4 6.4Q21.0 5.0 22.5 4.9L39.4 4.0Q40.0 4.0 39.8 4.5L37.0 18.9L34.6 33.2Q34.2 35.7 32.3 37.3L31.7 37.8Q29.7 39.4 27.9 37.8L27.6 37.4Q25.8 35.8 26.1 33.3L26.4 30.9Q26.7 28.9 27.8 27.2L28.2 26.5Q29.5 24.5 27.4 23.2L26.3 22.5Q23.7 20.9 21.5 21.9L20.1 22.6Q18.7 23.2 18.3 24.5L18.1 25.1Q17.8 26.1 16.8 26.1L5.9 26.5Q4.7 26.6 4.9 25.4L5.9 18.3Z"/></svg></div><div class="c c2">10.</div><div class="c c3">Looking for Alaska</div><div class="c c4">Green, John</div><div class="c c5"></div><div class="c c6"></div></div>
<div class="row odd" style="top:785px;height:52px"><div class="c c0"><svg class="ic star" viewBox="0 0 40 40"><path class="halo" d="M17.7 5.1Q17.9 3.6 19.4 3.6L20.6 3.6Q22.1 3.6 22.3 5.1L23.4 11.4Q23.7 12.9 25.2 13.1L35.2 14.4Q36.5 14.6 36.2 15.8L36.1 16.0Q35.8 17.2 34.9 18.1L29.6 23.1Q28.5 24.1 29.0 25.6L31.5 32.3Q32.0 33.7 30.7 34.4L28.9 35.2Q27.6 35.9 26.5 34.9L21.8 30.4Q20.0 28.7 18.2 30.4L13.5 34.9Q12.4 35.9 11.1 35.2L9.3 34.4Q8.0 33.7 8.5 32.3L10.9 25.6Q11.4 24.2 10.3 23.1L5.1 18.1Q4.2 17.2 3.9 16.0L3.8 15.8Q3.5 14.6 4.8 14.4L14.8 13.1Q16.3 12.9 16.6 11.4Z"/><path d="M17.7 5.1Q17.9 3.6 19.4 3.6L20.6 3.6Q22.1 3.6 22.3 5.1L23.4 11.4Q23.7 12.9 25.2 13.1L35.2 14.4Q36.5 14.6 36.2 15.8L36.1 16.0Q35.8 17.2 34.9 18.1L29.6 23.1Q28.5 24.1 29.0 25.6L31.5 32.3Q32.0 33.7 30.7 34.4L28.9 35.2Q27.6 35.9 26.5 34.9L21.8 30.4Q20.0 28.7 18.2 30.4L13.5 34.9Q12.4 35.9 11.1 35.2L9.3 34.4Q8.0 33.7 8.5 32.3L10.9 25.6Q11.4 24.2 10.3 23.1L5.1 18.1Q4.2 17.2 3.9 16.0L3.8 15.8Q3.5 14.6 4.8 14.4L14.8 13.1Q16.3 12.9 16.6 11.4Z"/></svg></div><div class="c c1"><svg class="ic flag" viewBox="0 0 44 44"><path class="halo" d="M6.6 9.8Q6.7 8.6 7.9 8.7L18.1 9.1Q19.1 9.1 19.5 8.2L20.4 6.4Q21.0 5.0 22.5 4.9L39.4 4.0Q40.0 4.0 39.8 4.5L37.0 18.9L34.6 33.2Q34.2 35.7 32.3 37.3L31.7 37.8Q29.7 39.4 27.9 37.8L27.6 37.4Q25.8 35.8 26.1 33.3L26.4 30.9Q26.7 28.9 27.8 27.2L28.2 26.5Q29.5 24.5 27.4 23.2L26.3 22.5Q23.7 20.9 21.5 21.9L20.1 22.6Q18.7 23.2 18.3 24.5L18.1 25.1Q17.8 26.1 16.8 26.1L5.9 26.5Q4.7 26.6 4.9 25.4L5.9 18.3Z"/><path d="M6.6 9.8Q6.7 8.6 7.9 8.7L18.1 9.1Q19.1 9.1 19.5 8.2L20.4 6.4Q21.0 5.0 22.5 4.9L39.4 4.0Q40.0 4.0 39.8 4.5L37.0 18.9L34.6 33.2Q34.2 35.7 32.3 37.3L31.7 37.8Q29.7 39.4 27.9 37.8L27.6 37.4Q25.8 35.8 26.1 33.3L26.4 30.9Q26.7 28.9 27.8 27.2L28.2 26.5Q29.5 24.5 27.4 23.2L26.3 22.5Q23.7 20.9 21.5 21.9L20.1 22.6Q18.7 23.2 18.3 24.5L18.1 25.1Q17.8 26.1 16.8 26.1L5.9 26.5Q4.7 26.6 4.9 25.4L5.9 18.3Z"/></svg></div><div class="c c2">11.</div><div class="c c3">Melissa (George)</div><div class="c c4">Gino, Alex</div><div class="c c5"></div><div class="c c6"></div></div>
<div class="row even" style="top:837px;height:52px"><div class="c c0"><svg class="ic star" viewBox="0 0 40 40"><path class="halo" d="M17.7 5.1Q17.9 3.6 19.4 3.6L20.6 3.6Q22.1 3.6 22.3 5.1L23.4 11.4Q23.7 12.9 25.2 13.1L35.2 14.4Q36.5 14.6 36.2 15.8L36.1 16.0Q35.8 17.2 34.9 18.1L29.6 23.1Q28.5 24.1 29.0 25.6L31.5 32.3Q32.0 33.7 30.7 34.4L28.9 35.2Q27.6 35.9 26.5 34.9L21.8 30.4Q20.0 28.7 18.2 30.4L13.5 34.9Q12.4 35.9 11.1 35.2L9.3 34.4Q8.0 33.7 8.5 32.3L10.9 25.6Q11.4 24.2 10.3 23.1L5.1 18.1Q4.2 17.2 3.9 16.0L3.8 15.8Q3.5 14.6 4.8 14.4L14.8 13.1Q16.3 12.9 16.6 11.4Z"/><path d="M17.7 5.1Q17.9 3.6 19.4 3.6L20.6 3.6Q22.1 3.6 22.3 5.1L23.4 11.4Q23.7 12.9 25.2 13.1L35.2 14.4Q36.5 14.6 36.2 15.8L36.1 16.0Q35.8 17.2 34.9 18.1L29.6 23.1Q28.5 24.1 29.0 25.6L31.5 32.3Q32.0 33.7 30.7 34.4L28.9 35.2Q27.6 35.9 26.5 34.9L21.8 30.4Q20.0 28.7 18.2 30.4L13.5 34.9Q12.4 35.9 11.1 35.2L9.3 34.4Q8.0 33.7 8.5 32.3L10.9 25.6Q11.4 24.2 10.3 23.1L5.1 18.1Q4.2 17.2 3.9 16.0L3.8 15.8Q3.5 14.6 4.8 14.4L14.8 13.1Q16.3 12.9 16.6 11.4Z"/></svg></div><div class="c c1"><svg class="ic flag" viewBox="0 0 44 44"><path class="halo" d="M6.6 9.8Q6.7 8.6 7.9 8.7L18.1 9.1Q19.1 9.1 19.5 8.2L20.4 6.4Q21.0 5.0 22.5 4.9L39.4 4.0Q40.0 4.0 39.8 4.5L37.0 18.9L34.6 33.2Q34.2 35.7 32.3 37.3L31.7 37.8Q29.7 39.4 27.9 37.8L27.6 37.4Q25.8 35.8 26.1 33.3L26.4 30.9Q26.7 28.9 27.8 27.2L28.2 26.5Q29.5 24.5 27.4 23.2L26.3 22.5Q23.7 20.9 21.5 21.9L20.1 22.6Q18.7 23.2 18.3 24.5L18.1 25.1Q17.8 26.1 16.8 26.1L5.9 26.5Q4.7 26.6 4.9 25.4L5.9 18.3Z"/><path d="M6.6 9.8Q6.7 8.6 7.9 8.7L18.1 9.1Q19.1 9.1 19.5 8.2L20.4 6.4Q21.0 5.0 22.5 4.9L39.4 4.0Q40.0 4.0 39.8 4.5L37.0 18.9L34.6 33.2Q34.2 35.7 32.3 37.3L31.7 37.8Q29.7 39.4 27.9 37.8L27.6 37.4Q25.8 35.8 26.1 33.3L26.4 30.9Q26.7 28.9 27.8 27.2L28.2 26.5Q29.5 24.5 27.4 23.2L26.3 22.5Q23.7 20.9 21.5 21.9L20.1 22.6Q18.7 23.2 18.3 24.5L18.1 25.1Q17.8 26.1 16.8 26.1L5.9 26.5Q4.7 26.6 4.9 25.4L5.9 18.3Z"/></svg></div><div class="c c2">12.</div><div class="c c3">Nineteen Minutes</div><div class="c c4">Picoult, Jodi</div><div class="c c5"></div><div class="c c6"></div></div>
<div class="row odd" style="top:889px;height:52px"><div class="c c0"><svg class="ic star" viewBox="0 0 40 40"><path class="halo" d="M17.7 5.1Q17.9 3.6 19.4 3.6L20.6 3.6Q22.1 3.6 22.3 5.1L23.4 11.4Q23.7 12.9 25.2 13.1L35.2 14.4Q36.5 14.6 36.2 15.8L36.1 16.0Q35.8 17.2 34.9 18.1L29.6 23.1Q28.5 24.1 29.0 25.6L31.5 32.3Q32.0 33.7 30.7 34.4L28.9 35.2Q27.6 35.9 26.5 34.9L21.8 30.4Q20.0 28.7 18.2 30.4L13.5 34.9Q12.4 35.9 11.1 35.2L9.3 34.4Q8.0 33.7 8.5 32.3L10.9 25.6Q11.4 24.2 10.3 23.1L5.1 18.1Q4.2 17.2 3.9 16.0L3.8 15.8Q3.5 14.6 4.8 14.4L14.8 13.1Q16.3 12.9 16.6 11.4Z"/><path d="M17.7 5.1Q17.9 3.6 19.4 3.6L20.6 3.6Q22.1 3.6 22.3 5.1L23.4 11.4Q23.7 12.9 25.2 13.1L35.2 14.4Q36.5 14.6 36.2 15.8L36.1 16.0Q35.8 17.2 34.9 18.1L29.6 23.1Q28.5 24.1 29.0 25.6L31.5 32.3Q32.0 33.7 30.7 34.4L28.9 35.2Q27.6 35.9 26.5 34.9L21.8 30.4Q20.0 28.7 18.2 30.4L13.5 34.9Q12.4 35.9 11.1 35.2L9.3 34.4Q8.0 33.7 8.5 32.3L10.9 25.6Q11.4 24.2 10.3 23.1L5.1 18.1Q4.2 17.2 3.9 16.0L3.8 15.8Q3.5 14.6 4.8 14.4L14.8 13.1Q16.3 12.9 16.6 11.4Z"/></svg></div><div class="c c1"><svg class="ic flag" viewBox="0 0 44 44"><path class="halo" d="M6.6 9.8Q6.7 8.6 7.9 8.7L18.1 9.1Q19.1 9.1 19.5 8.2L20.4 6.4Q21.0 5.0 22.5 4.9L39.4 4.0Q40.0 4.0 39.8 4.5L37.0 18.9L34.6 33.2Q34.2 35.7 32.3 37.3L31.7 37.8Q29.7 39.4 27.9 37.8L27.6 37.4Q25.8 35.8 26.1 33.3L26.4 30.9Q26.7 28.9 27.8 27.2L28.2 26.5Q29.5 24.5 27.4 23.2L26.3 22.5Q23.7 20.9 21.5 21.9L20.1 22.6Q18.7 23.2 18.3 24.5L18.1 25.1Q17.8 26.1 16.8 26.1L5.9 26.5Q4.7 26.6 4.9 25.4L5.9 18.3Z"/><path d="M6.6 9.8Q6.7 8.6 7.9 8.7L18.1 9.1Q19.1 9.1 19.5 8.2L20.4 6.4Q21.0 5.0 22.5 4.9L39.4 4.0Q40.0 4.0 39.8 4.5L37.0 18.9L34.6 33.2Q34.2 35.7 32.3 37.3L31.7 37.8Q29.7 39.4 27.9 37.8L27.6 37.4Q25.8 35.8 26.1 33.3L26.4 30.9Q26.7 28.9 27.8 27.2L28.2 26.5Q29.5 24.5 27.4 23.2L26.3 22.5Q23.7 20.9 21.5 21.9L20.1 22.6Q18.7 23.2 18.3 24.5L18.1 25.1Q17.8 26.1 16.8 26.1L5.9 26.5Q4.7 26.6 4.9 25.4L5.9 18.3Z"/></svg></div><div class="c c2">13.</div><div class="c c3">Redwood and Ponytail</div><div class="c c4">Holt, K. A.</div><div class="c c5"></div><div class="c c6"></div></div>
<div class="row even" style="top:941px;height:52px"><div class="c c0"><svg class="ic star" viewBox="0 0 40 40"><path class="halo" d="M17.7 5.1Q17.9 3.6 19.4 3.6L20.6 3.6Q22.1 3.6 22.3 5.1L23.4 11.4Q23.7 12.9 25.2 13.1L35.2 14.4Q36.5 14.6 36.2 15.8L36.1 16.0Q35.8 17.2 34.9 18.1L29.6 23.1Q28.5 24.1 29.0 25.6L31.5 32.3Q32.0 33.7 30.7 34.4L28.9 35.2Q27.6 35.9 26.5 34.9L21.8 30.4Q20.0 28.7 18.2 30.4L13.5 34.9Q12.4 35.9 11.1 35.2L9.3 34.4Q8.0 33.7 8.5 32.3L10.9 25.6Q11.4 24.2 10.3 23.1L5.1 18.1Q4.2 17.2 3.9 16.0L3.8 15.8Q3.5 14.6 4.8 14.4L14.8 13.1Q16.3 12.9 16.6 11.4Z"/><path d="M17.7 5.1Q17.9 3.6 19.4 3.6L20.6 3.6Q22.1 3.6 22.3 5.1L23.4 11.4Q23.7 12.9 25.2 13.1L35.2 14.4Q36.5 14.6 36.2 15.8L36.1 16.0Q35.8 17.2 34.9 18.1L29.6 23.1Q28.5 24.1 29.0 25.6L31.5 32.3Q32.0 33.7 30.7 34.4L28.9 35.2Q27.6 35.9 26.5 34.9L21.8 30.4Q20.0 28.7 18.2 30.4L13.5 34.9Q12.4 35.9 11.1 35.2L9.3 34.4Q8.0 33.7 8.5 32.3L10.9 25.6Q11.4 24.2 10.3 23.1L5.1 18.1Q4.2 17.2 3.9 16.0L3.8 15.8Q3.5 14.6 4.8 14.4L14.8 13.1Q16.3 12.9 16.6 11.4Z"/></svg></div><div class="c c1"><svg class="ic flag" viewBox="0 0 44 44"><path class="halo" d="M6.6 9.8Q6.7 8.6 7.9 8.7L18.1 9.1Q19.1 9.1 19.5 8.2L20.4 6.4Q21.0 5.0 22.5 4.9L39.4 4.0Q40.0 4.0 39.8 4.5L37.0 18.9L34.6 33.2Q34.2 35.7 32.3 37.3L31.7 37.8Q29.7 39.4 27.9 37.8L27.6 37.4Q25.8 35.8 26.1 33.3L26.4 30.9Q26.7 28.9 27.8 27.2L28.2 26.5Q29.5 24.5 27.4 23.2L26.3 22.5Q23.7 20.9 21.5 21.9L20.1 22.6Q18.7 23.2 18.3 24.5L18.1 25.1Q17.8 26.1 16.8 26.1L5.9 26.5Q4.7 26.6 4.9 25.4L5.9 18.3Z"/><path d="M6.6 9.8Q6.7 8.6 7.9 8.7L18.1 9.1Q19.1 9.1 19.5 8.2L20.4 6.4Q21.0 5.0 22.5 4.9L39.4 4.0Q40.0 4.0 39.8 4.5L37.0 18.9L34.6 33.2Q34.2 35.7 32.3 37.3L31.7 37.8Q29.7 39.4 27.9 37.8L27.6 37.4Q25.8 35.8 26.1 33.3L26.4 30.9Q26.7 28.9 27.8 27.2L28.2 26.5Q29.5 24.5 27.4 23.2L26.3 22.5Q23.7 20.9 21.5 21.9L20.1 22.6Q18.7 23.2 18.3 24.5L18.1 25.1Q17.8 26.1 16.8 26.1L5.9 26.5Q4.7 26.6 4.9 25.4L5.9 18.3Z"/></svg></div><div class="c c2">14.</div><div class="c c3">Smoke</div><div class="c c4">Hopkins, Ellen</div><div class="c c5"></div><div class="c c6"></div></div>
<div class="row odd" style="top:993px;height:52px"><div class="c c0"><svg class="ic star" viewBox="0 0 40 40"><path class="halo" d="M17.7 5.1Q17.9 3.6 19.4 3.6L20.6 3.6Q22.1 3.6 22.3 5.1L23.4 11.4Q23.7 12.9 25.2 13.1L35.2 14.4Q36.5 14.6 36.2 15.8L36.1 16.0Q35.8 17.2 34.9 18.1L29.6 23.1Q28.5 24.1 29.0 25.6L31.5 32.3Q32.0 33.7 30.7 34.4L28.9 35.2Q27.6 35.9 26.5 34.9L21.8 30.4Q20.0 28.7 18.2 30.4L13.5 34.9Q12.4 35.9 11.1 35.2L9.3 34.4Q8.0 33.7 8.5 32.3L10.9 25.6Q11.4 24.2 10.3 23.1L5.1 18.1Q4.2 17.2 3.9 16.0L3.8 15.8Q3.5 14.6 4.8 14.4L14.8 13.1Q16.3 12.9 16.6 11.4Z"/><path d="M17.7 5.1Q17.9 3.6 19.4 3.6L20.6 3.6Q22.1 3.6 22.3 5.1L23.4 11.4Q23.7 12.9 25.2 13.1L35.2 14.4Q36.5 14.6 36.2 15.8L36.1 16.0Q35.8 17.2 34.9 18.1L29.6 23.1Q28.5 24.1 29.0 25.6L31.5 32.3Q32.0 33.7 30.7 34.4L28.9 35.2Q27.6 35.9 26.5 34.9L21.8 30.4Q20.0 28.7 18.2 30.4L13.5 34.9Q12.4 35.9 11.1 35.2L9.3 34.4Q8.0 33.7 8.5 32.3L10.9 25.6Q11.4 24.2 10.3 23.1L5.1 18.1Q4.2 17.2 3.9 16.0L3.8 15.8Q3.5 14.6 4.8 14.4L14.8 13.1Q16.3 12.9 16.6 11.4Z"/></svg></div><div class="c c1"><svg class="ic flag" viewBox="0 0 44 44"><path class="halo" d="M6.6 9.8Q6.7 8.6 7.9 8.7L18.1 9.1Q19.1 9.1 19.5 8.2L20.4 6.4Q21.0 5.0 22.5 4.9L39.4 4.0Q40.0 4.0 39.8 4.5L37.0 18.9L34.6 33.2Q34.2 35.7 32.3 37.3L31.7 37.8Q29.7 39.4 27.9 37.8L27.6 37.4Q25.8 35.8 26.1 33.3L26.4 30.9Q26.7 28.9 27.8 27.2L28.2 26.5Q29.5 24.5 27.4 23.2L26.3 22.5Q23.7 20.9 21.5 21.9L20.1 22.6Q18.7 23.2 18.3 24.5L18.1 25.1Q17.8 26.1 16.8 26.1L5.9 26.5Q4.7 26.6 4.9 25.4L5.9 18.3Z"/><path d="M6.6 9.8Q6.7 8.6 7.9 8.7L18.1 9.1Q19.1 9.1 19.5 8.2L20.4 6.4Q21.0 5.0 22.5 4.9L39.4 4.0Q40.0 4.0 39.8 4.5L37.0 18.9L34.6 33.2Q34.2 35.7 32.3 37.3L31.7 37.8Q29.7 39.4 27.9 37.8L27.6 37.4Q25.8 35.8 26.1 33.3L26.4 30.9Q26.7 28.9 27.8 27.2L28.2 26.5Q29.5 24.5 27.4 23.2L26.3 22.5Q23.7 20.9 21.5 21.9L20.1 22.6Q18.7 23.2 18.3 24.5L18.1 25.1Q17.8 26.1 16.8 26.1L5.9 26.5Q4.7 26.6 4.9 25.4L5.9 18.3Z"/></svg></div><div class="c c2">15.</div><div class="c c3">The Bluest Eye</div><div class="c c4">Morrison, Toni</div><div class="c c5"></div><div class="c c6"></div></div>
<div class="row even" style="top:1045px;height:52px"><div class="c c0"><svg class="ic star" viewBox="0 0 40 40"><path class="halo" d="M17.7 5.1Q17.9 3.6 19.4 3.6L20.6 3.6Q22.1 3.6 22.3 5.1L23.4 11.4Q23.7 12.9 25.2 13.1L35.2 14.4Q36.5 14.6 36.2 15.8L36.1 16.0Q35.8 17.2 34.9 18.1L29.6 23.1Q28.5 24.1 29.0 25.6L31.5 32.3Q32.0 33.7 30.7 34.4L28.9 35.2Q27.6 35.9 26.5 34.9L21.8 30.4Q20.0 28.7 18.2 30.4L13.5 34.9Q12.4 35.9 11.1 35.2L9.3 34.4Q8.0 33.7 8.5 32.3L10.9 25.6Q11.4 24.2 10.3 23.1L5.1 18.1Q4.2 17.2 3.9 16.0L3.8 15.8Q3.5 14.6 4.8 14.4L14.8 13.1Q16.3 12.9 16.6 11.4Z"/><path d="M17.7 5.1Q17.9 3.6 19.4 3.6L20.6 3.6Q22.1 3.6 22.3 5.1L23.4 11.4Q23.7 12.9 25.2 13.1L35.2 14.4Q36.5 14.6 36.2 15.8L36.1 16.0Q35.8 17.2 34.9 18.1L29.6 23.1Q28.5 24.1 29.0 25.6L31.5 32.3Q32.0 33.7 30.7 34.4L28.9 35.2Q27.6 35.9 26.5 34.9L21.8 30.4Q20.0 28.7 18.2 30.4L13.5 34.9Q12.4 35.9 11.1 35.2L9.3 34.4Q8.0 33.7 8.5 32.3L10.9 25.6Q11.4 24.2 10.3 23.1L5.1 18.1Q4.2 17.2 3.9 16.0L3.8 15.8Q3.5 14.6 4.8 14.4L14.8 13.1Q16.3 12.9 16.6 11.4Z"/></svg></div><div class="c c1"><svg class="ic flag" viewBox="0 0 44 44"><path class="halo" d="M6.6 9.8Q6.7 8.6 7.9 8.7L18.1 9.1Q19.1 9.1 19.5 8.2L20.4 6.4Q21.0 5.0 22.5 4.9L39.4 4.0Q40.0 4.0 39.8 4.5L37.0 18.9L34.6 33.2Q34.2 35.7 32.3 37.3L31.7 37.8Q29.7 39.4 27.9 37.8L27.6 37.4Q25.8 35.8 26.1 33.3L26.4 30.9Q26.7 28.9 27.8 27.2L28.2 26.5Q29.5 24.5 27.4 23.2L26.3 22.5Q23.7 20.9 21.5 21.9L20.1 22.6Q18.7 23.2 18.3 24.5L18.1 25.1Q17.8 26.1 16.8 26.1L5.9 26.5Q4.7 26.6 4.9 25.4L5.9 18.3Z"/><path d="M6.6 9.8Q6.7 8.6 7.9 8.7L18.1 9.1Q19.1 9.1 19.5 8.2L20.4 6.4Q21.0 5.0 22.5 4.9L39.4 4.0Q40.0 4.0 39.8 4.5L37.0 18.9L34.6 33.2Q34.2 35.7 32.3 37.3L31.7 37.8Q29.7 39.4 27.9 37.8L27.6 37.4Q25.8 35.8 26.1 33.3L26.4 30.9Q26.7 28.9 27.8 27.2L28.2 26.5Q29.5 24.5 27.4 23.2L26.3 22.5Q23.7 20.9 21.5 21.9L20.1 22.6Q18.7 23.2 18.3 24.5L18.1 25.1Q17.8 26.1 16.8 26.1L5.9 26.5Q4.7 26.6 4.9 25.4L5.9 18.3Z"/></svg></div><div class="c c2">16.</div><div class="c c3">The Hate U Give</div><div class="c c4">Thomas, Angie</div><div class="c c5"></div><div class="c c6"></div></div>
<div class="row odd" style="top:1097px;height:52px"><div class="c c0"><svg class="ic star" viewBox="0 0 40 40"><path class="halo" d="M17.7 5.1Q17.9 3.6 19.4 3.6L20.6 3.6Q22.1 3.6 22.3 5.1L23.4 11.4Q23.7 12.9 25.2 13.1L35.2 14.4Q36.5 14.6 36.2 15.8L36.1 16.0Q35.8 17.2 34.9 18.1L29.6 23.1Q28.5 24.1 29.0 25.6L31.5 32.3Q32.0 33.7 30.7 34.4L28.9 35.2Q27.6 35.9 26.5 34.9L21.8 30.4Q20.0 28.7 18.2 30.4L13.5 34.9Q12.4 35.9 11.1 35.2L9.3 34.4Q8.0 33.7 8.5 32.3L10.9 25.6Q11.4 24.2 10.3 23.1L5.1 18.1Q4.2 17.2 3.9 16.0L3.8 15.8Q3.5 14.6 4.8 14.4L14.8 13.1Q16.3 12.9 16.6 11.4Z"/><path d="M17.7 5.1Q17.9 3.6 19.4 3.6L20.6 3.6Q22.1 3.6 22.3 5.1L23.4 11.4Q23.7 12.9 25.2 13.1L35.2 14.4Q36.5 14.6 36.2 15.8L36.1 16.0Q35.8 17.2 34.9 18.1L29.6 23.1Q28.5 24.1 29.0 25.6L31.5 32.3Q32.0 33.7 30.7 34.4L28.9 35.2Q27.6 35.9 26.5 34.9L21.8 30.4Q20.0 28.7 18.2 30.4L13.5 34.9Q12.4 35.9 11.1 35.2L9.3 34.4Q8.0 33.7 8.5 32.3L10.9 25.6Q11.4 24.2 10.3 23.1L5.1 18.1Q4.2 17.2 3.9 16.0L3.8 15.8Q3.5 14.6 4.8 14.4L14.8 13.1Q16.3 12.9 16.6 11.4Z"/></svg></div><div class="c c1"><svg class="ic flag" viewBox="0 0 44 44"><path class="halo" d="M6.6 9.8Q6.7 8.6 7.9 8.7L18.1 9.1Q19.1 9.1 19.5 8.2L20.4 6.4Q21.0 5.0 22.5 4.9L39.4 4.0Q40.0 4.0 39.8 4.5L37.0 18.9L34.6 33.2Q34.2 35.7 32.3 37.3L31.7 37.8Q29.7 39.4 27.9 37.8L27.6 37.4Q25.8 35.8 26.1 33.3L26.4 30.9Q26.7 28.9 27.8 27.2L28.2 26.5Q29.5 24.5 27.4 23.2L26.3 22.5Q23.7 20.9 21.5 21.9L20.1 22.6Q18.7 23.2 18.3 24.5L18.1 25.1Q17.8 26.1 16.8 26.1L5.9 26.5Q4.7 26.6 4.9 25.4L5.9 18.3Z"/><path d="M6.6 9.8Q6.7 8.6 7.9 8.7L18.1 9.1Q19.1 9.1 19.5 8.2L20.4 6.4Q21.0 5.0 22.5 4.9L39.4 4.0Q40.0 4.0 39.8 4.5L37.0 18.9L34.6 33.2Q34.2 35.7 32.3 37.3L31.7 37.8Q29.7 39.4 27.9 37.8L27.6 37.4Q25.8 35.8 26.1 33.3L26.4 30.9Q26.7 28.9 27.8 27.2L28.2 26.5Q29.5 24.5 27.4 23.2L26.3 22.5Q23.7 20.9 21.5 21.9L20.1 22.6Q18.7 23.2 18.3 24.5L18.1 25.1Q17.8 26.1 16.8 26.1L5.9 26.5Q4.7 26.6 4.9 25.4L5.9 18.3Z"/></svg></div><div class="c c2">17.</div><div class="c c3">The Kite Runner</div><div class="c c4">Hosseini, Khaled</div><div class="c c5"></div><div class="c c6"></div></div>
<div class="row even" style="top:1149px;height:52px"><div class="c c0"><svg class="ic star" viewBox="0 0 40 40"><path class="halo" d="M17.7 5.1Q17.9 3.6 19.4 3.6L20.6 3.6Q22.1 3.6 22.3 5.1L23.4 11.4Q23.7 12.9 25.2 13.1L35.2 14.4Q36.5 14.6 36.2 15.8L36.1 16.0Q35.8 17.2 34.9 18.1L29.6 23.1Q28.5 24.1 29.0 25.6L31.5 32.3Q32.0 33.7 30.7 34.4L28.9 35.2Q27.6 35.9 26.5 34.9L21.8 30.4Q20.0 28.7 18.2 30.4L13.5 34.9Q12.4 35.9 11.1 35.2L9.3 34.4Q8.0 33.7 8.5 32.3L10.9 25.6Q11.4 24.2 10.3 23.1L5.1 18.1Q4.2 17.2 3.9 16.0L3.8 15.8Q3.5 14.6 4.8 14.4L14.8 13.1Q16.3 12.9 16.6 11.4Z"/><path d="M17.7 5.1Q17.9 3.6 19.4 3.6L20.6 3.6Q22.1 3.6 22.3 5.1L23.4 11.4Q23.7 12.9 25.2 13.1L35.2 14.4Q36.5 14.6 36.2 15.8L36.1 16.0Q35.8 17.2 34.9 18.1L29.6 23.1Q28.5 24.1 29.0 25.6L31.5 32.3Q32.0 33.7 30.7 34.4L28.9 35.2Q27.6 35.9 26.5 34.9L21.8 30.4Q20.0 28.7 18.2 30.4L13.5 34.9Q12.4 35.9 11.1 35.2L9.3 34.4Q8.0 33.7 8.5 32.3L10.9 25.6Q11.4 24.2 10.3 23.1L5.1 18.1Q4.2 17.2 3.9 16.0L3.8 15.8Q3.5 14.6 4.8 14.4L14.8 13.1Q16.3 12.9 16.6 11.4Z"/></svg></div><div class="c c1"><svg class="ic flag" viewBox="0 0 44 44"><path class="halo" d="M6.6 9.8Q6.7 8.6 7.9 8.7L18.1 9.1Q19.1 9.1 19.5 8.2L20.4 6.4Q21.0 5.0 22.5 4.9L39.4 4.0Q40.0 4.0 39.8 4.5L37.0 18.9L34.6 33.2Q34.2 35.7 32.3 37.3L31.7 37.8Q29.7 39.4 27.9 37.8L27.6 37.4Q25.8 35.8 26.1 33.3L26.4 30.9Q26.7 28.9 27.8 27.2L28.2 26.5Q29.5 24.5 27.4 23.2L26.3 22.5Q23.7 20.9 21.5 21.9L20.1 22.6Q18.7 23.2 18.3 24.5L18.1 25.1Q17.8 26.1 16.8 26.1L5.9 26.5Q4.7 26.6 4.9 25.4L5.9 18.3Z"/><path d="M6.6 9.8Q6.7 8.6 7.9 8.7L18.1 9.1Q19.1 9.1 19.5 8.2L20.4 6.4Q21.0 5.0 22.5 4.9L39.4 4.0Q40.0 4.0 39.8 4.5L37.0 18.9L34.6 33.2Q34.2 35.7 32.3 37.3L31.7 37.8Q29.7 39.4 27.9 37.8L27.6 37.4Q25.8 35.8 26.1 33.3L26.4 30.9Q26.7 28.9 27.8 27.2L28.2 26.5Q29.5 24.5 27.4 23.2L26.3 22.5Q23.7 20.9 21.5 21.9L20.1 22.6Q18.7 23.2 18.3 24.5L18.1 25.1Q17.8 26.1 16.8 26.1L5.9 26.5Q4.7 26.6 4.9 25.4L5.9 18.3Z"/></svg></div><div class="c c2">18.</div><div class="c c3">The Perks of Being a Wallflower</div><div class="c c4">Chbosky, Stephen</div><div class="c c5"></div><div class="c c6"></div></div>
<div class="row odd" style="top:1201px;height:52px"><div class="c c0"><svg class="ic star" viewBox="0 0 40 40"><path class="halo" d="M17.7 5.1Q17.9 3.6 19.4 3.6L20.6 3.6Q22.1 3.6 22.3 5.1L23.4 11.4Q23.7 12.9 25.2 13.1L35.2 14.4Q36.5 14.6 36.2 15.8L36.1 16.0Q35.8 17.2 34.9 18.1L29.6 23.1Q28.5 24.1 29.0 25.6L31.5 32.3Q32.0 33.7 30.7 34.4L28.9 35.2Q27.6 35.9 26.5 34.9L21.8 30.4Q20.0 28.7 18.2 30.4L13.5 34.9Q12.4 35.9 11.1 35.2L9.3 34.4Q8.0 33.7 8.5 32.3L10.9 25.6Q11.4 24.2 10.3 23.1L5.1 18.1Q4.2 17.2 3.9 16.0L3.8 15.8Q3.5 14.6 4.8 14.4L14.8 13.1Q16.3 12.9 16.6 11.4Z"/><path d="M17.7 5.1Q17.9 3.6 19.4 3.6L20.6 3.6Q22.1 3.6 22.3 5.1L23.4 11.4Q23.7 12.9 25.2 13.1L35.2 14.4Q36.5 14.6 36.2 15.8L36.1 16.0Q35.8 17.2 34.9 18.1L29.6 23.1Q28.5 24.1 29.0 25.6L31.5 32.3Q32.0 33.7 30.7 34.4L28.9 35.2Q27.6 35.9 26.5 34.9L21.8 30.4Q20.0 28.7 18.2 30.4L13.5 34.9Q12.4 35.9 11.1 35.2L9.3 34.4Q8.0 33.7 8.5 32.3L10.9 25.6Q11.4 24.2 10.3 23.1L5.1 18.1Q4.2 17.2 3.9 16.0L3.8 15.8Q3.5 14.6 4.8 14.4L14.8 13.1Q16.3 12.9 16.6 11.4Z"/></svg></div><div class="c c1"><svg class="ic flag" viewBox="0 0 44 44"><path class="halo" d="M6.6 9.8Q6.7 8.6 7.9 8.7L18.1 9.1Q19.1 9.1 19.5 8.2L20.4 6.4Q21.0 5.0 22.5 4.9L39.4 4.0Q40.0 4.0 39.8 4.5L37.0 18.9L34.6 33.2Q34.2 35.7 32.3 37.3L31.7 37.8Q29.7 39.4 27.9 37.8L27.6 37.4Q25.8 35.8 26.1 33.3L26.4 30.9Q26.7 28.9 27.8 27.2L28.2 26.5Q29.5 24.5 27.4 23.2L26.3 22.5Q23.7 20.9 21.5 21.9L20.1 22.6Q18.7 23.2 18.3 24.5L18.1 25.1Q17.8 26.1 16.8 26.1L5.9 26.5Q4.7 26.6 4.9 25.4L5.9 18.3Z"/><path d="M6.6 9.8Q6.7 8.6 7.9 8.7L18.1 9.1Q19.1 9.1 19.5 8.2L20.4 6.4Q21.0 5.0 22.5 4.9L39.4 4.0Q40.0 4.0 39.8 4.5L37.0 18.9L34.6 33.2Q34.2 35.7 32.3 37.3L31.7 37.8Q29.7 39.4 27.9 37.8L27.6 37.4Q25.8 35.8 26.1 33.3L26.4 30.9Q26.7 28.9 27.8 27.2L28.2 26.5Q29.5 24.5 27.4 23.2L26.3 22.5Q23.7 20.9 21.5 21.9L20.1 22.6Q18.7 23.2 18.3 24.5L18.1 25.1Q17.8 26.1 16.8 26.1L5.9 26.5Q4.7 26.6 4.9 25.4L5.9 18.3Z"/></svg></div><div class="c c2">19.</div><div class="c c3">Thirteen Reasons Why</div><div class="c c4">Asher, Jay</div><div class="c c5"></div><div class="c c6"></div></div>
<div class="row even" style="top:1253px;height:52px"><div class="c c0"><svg class="ic star" viewBox="0 0 40 40"><path class="halo" d="M17.7 5.1Q17.9 3.6 19.4 3.6L20.6 3.6Q22.1 3.6 22.3 5.1L23.4 11.4Q23.7 12.9 25.2 13.1L35.2 14.4Q36.5 14.6 36.2 15.8L36.1 16.0Q35.8 17.2 34.9 18.1L29.6 23.1Q28.5 24.1 29.0 25.6L31.5 32.3Q32.0 33.7 30.7 34.4L28.9 35.2Q27.6 35.9 26.5 34.9L21.8 30.4Q20.0 28.7 18.2 30.4L13.5 34.9Q12.4 35.9 11.1 35.2L9.3 34.4Q8.0 33.7 8.5 32.3L10.9 25.6Q11.4 24.2 10.3 23.1L5.1 18.1Q4.2 17.2 3.9 16.0L3.8 15.8Q3.5 14.6 4.8 14.4L14.8 13.1Q16.3 12.9 16.6 11.4Z"/><path d="M17.7 5.1Q17.9 3.6 19.4 3.6L20.6 3.6Q22.1 3.6 22.3 5.1L23.4 11.4Q23.7 12.9 25.2 13.1L35.2 14.4Q36.5 14.6 36.2 15.8L36.1 16.0Q35.8 17.2 34.9 18.1L29.6 23.1Q28.5 24.1 29.0 25.6L31.5 32.3Q32.0 33.7 30.7 34.4L28.9 35.2Q27.6 35.9 26.5 34.9L21.8 30.4Q20.0 28.7 18.2 30.4L13.5 34.9Q12.4 35.9 11.1 35.2L9.3 34.4Q8.0 33.7 8.5 32.3L10.9 25.6Q11.4 24.2 10.3 23.1L5.1 18.1Q4.2 17.2 3.9 16.0L3.8 15.8Q3.5 14.6 4.8 14.4L14.8 13.1Q16.3 12.9 16.6 11.4Z"/></svg></div><div class="c c1"><svg class="ic flag" viewBox="0 0 44 44"><path class="halo" d="M6.6 9.8Q6.7 8.6 7.9 8.7L18.1 9.1Q19.1 9.1 19.5 8.2L20.4 6.4Q21.0 5.0 22.5 4.9L39.4 4.0Q40.0 4.0 39.8 4.5L37.0 18.9L34.6 33.2Q34.2 35.7 32.3 37.3L31.7 37.8Q29.7 39.4 27.9 37.8L27.6 37.4Q25.8 35.8 26.1 33.3L26.4 30.9Q26.7 28.9 27.8 27.2L28.2 26.5Q29.5 24.5 27.4 23.2L26.3 22.5Q23.7 20.9 21.5 21.9L20.1 22.6Q18.7 23.2 18.3 24.5L18.1 25.1Q17.8 26.1 16.8 26.1L5.9 26.5Q4.7 26.6 4.9 25.4L5.9 18.3Z"/><path d="M6.6 9.8Q6.7 8.6 7.9 8.7L18.1 9.1Q19.1 9.1 19.5 8.2L20.4 6.4Q21.0 5.0 22.5 4.9L39.4 4.0Q40.0 4.0 39.8 4.5L37.0 18.9L34.6 33.2Q34.2 35.7 32.3 37.3L31.7 37.8Q29.7 39.4 27.9 37.8L27.6 37.4Q25.8 35.8 26.1 33.3L26.4 30.9Q26.7 28.9 27.8 27.2L28.2 26.5Q29.5 24.5 27.4 23.2L26.3 22.5Q23.7 20.9 21.5 21.9L20.1 22.6Q18.7 23.2 18.3 24.5L18.1 25.1Q17.8 26.1 16.8 26.1L5.9 26.5Q4.7 26.6 4.9 25.4L5.9 18.3Z"/></svg></div><div class="c c2">20.</div><div class="c c3">Tricks</div><div class="c c4">Hopkins, Ellen</div><div class="c c5"></div><div class="c c6"></div></div>

<div class="menu" style="left:252px;top:226px;width:308px">
<div class="mi sub">Facet</div>
<div class="mi">Text filter</div>
<div class="sep"></div>
<div class="mi sub">Edit cells</div>
<div class="mi sub">Edit column</div>
<div class="mi sub">Transpose</div>
<div class="sep"></div>
<div class="mi">Sort…</div>
<div class="mi sub">View</div>
<div class="sep"></div>
<div class="mi sub">Reconcile</div>
</div>

<div class="menu" style="left:556px;top:687px;width:434px">
<div class="mi hi">Start reconciling…</div>
<div class="sep"></div>
<div class="mi">Facets</div>
<div class="mi sub">Actions</div>
<div class="sep"></div>
<div class="mi">Copy reconciliation data…</div>
<div class="mi">Use values as identifiers…</div>
<div class="sep"></div>
<div class="mi">Add column with URLs of matched entities…</div>
<div class="mi">Add entity identifiers column…</div>
</div>

<div class="abs" id="tip">Reconcile text in this column with items in<br>another data source</div>
</div></body></html>
